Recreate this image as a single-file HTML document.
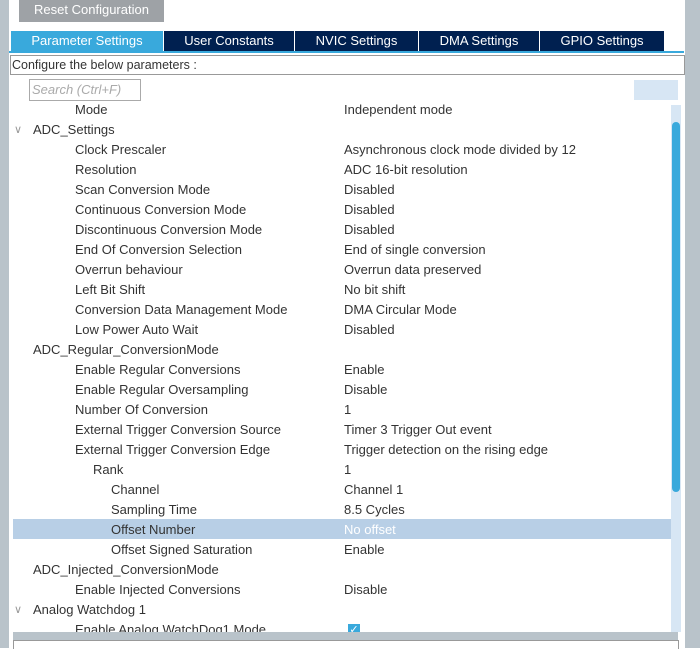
<!DOCTYPE html><html><head><style>
body{margin:0;width:700px;height:648px;overflow:hidden;background:#fff;font-family:"Liberation Sans",sans-serif;font-size:13px;color:#333;position:relative}
.a{position:absolute}
.row{position:absolute;left:13px;width:658px;height:20px;line-height:20px}
.row span{position:absolute;white-space:nowrap}
.row .v{left:331px}
.tab{position:absolute;top:31px;height:20px;line-height:20px;background:#002050;color:#fff;text-align:center;font-size:13px}
</style></head><body>
<div class="a" style="left:0;top:0;width:9px;height:648px;background:#b9c3ca"></div>
<div class="a" style="left:685px;top:0;width:15px;height:648px;background:#b9c3ca"></div>
<div class="a" style="left:19px;top:0;width:145px;height:22px;background:#9ea2a6;color:#fff;line-height:20px;text-align:center;font-size:13px">Reset Configuration</div>
<div class="tab" style="left:11px;width:152px;background:#39a9dc">Parameter Settings</div>
<div class="tab" style="left:164px;width:130px">User Constants</div>
<div class="tab" style="left:295px;width:123px">NVIC Settings</div>
<div class="tab" style="left:419px;width:120px">DMA Settings</div>
<div class="tab" style="left:540px;width:124px">GPIO Settings</div>
<div class="a" style="left:9px;top:51px;width:675px;height:2px;background:#39a9dc"></div>
<div class="a" style="left:10px;top:55px;width:672px;height:18px;border:1px solid #999;line-height:18px;padding-left:1px;box-sizing:content-box;font-size:12.5px">Configure the below parameters :</div>
<div class="a" style="left:29px;top:79px;color:#aaa;font-style:italic;line-height:20px;padding-left:2px;box-sizing:border-box;width:112px;height:22px;border:1px solid #aaa">Search (Ctrl+F)</div>
<div class="a" style="left:634px;top:80px;width:44px;height:20px;background:#d7e6f4"></div>
<div class="a" style="left:671px;top:105px;width:10px;height:527px;background:#d7e6f4"></div>
<div class="a" style="left:672px;top:122px;width:8px;height:370px;background:#39a9dc;border-radius:4px"></div>
<div class="row" style="top:519px;background:#b8cfe6"></div>
<div id="r"></div>
<div class="a" style="left:13px;top:632px;width:665px;height:8px;background:#b9c3ca"></div>
<div class="a" style="left:13px;top:640px;width:664px;height:8px;border:1px solid #999;border-bottom:none;background:#fff"></div>
<script>
var d=[["Mode","Independent mode",62],["ADC_Settings","",20,1],["Clock Prescaler","Asynchronous clock mode divided by 12",62],["Resolution","ADC 16-bit resolution",62],["Scan Conversion Mode","Disabled",62],["Continuous Conversion Mode","Disabled",62],["Discontinuous Conversion Mode","Disabled",62],["End Of Conversion Selection","End of single conversion",62],["Overrun behaviour","Overrun data preserved",62],["Left Bit Shift","No bit shift",62],["Conversion Data Management Mode","DMA Circular Mode",62],["Low Power Auto Wait","Disabled",62],["ADC_Regular_ConversionMode","",20],["Enable Regular Conversions","Enable",62],["Enable Regular Oversampling","Disable",62],["Number Of Conversion","1",62],["External Trigger Conversion Source","Timer 3 Trigger Out event",62],["External Trigger Conversion Edge","Trigger detection on the rising edge",62],["Rank","1",80],["Channel","Channel 1",98],["Sampling Time","8.5 Cycles",98],["Offset Number","No offset",98],["Offset Signed Saturation","Enable",98],["ADC_Injected_ConversionMode","",20],["Enable Injected Conversions","Disable",62],["Analog Watchdog 1","",20,1],["Enable Analog WatchDog1 Mode","\u2713",62]];
var h="";d.forEach(function(r,i){var t=100+i*20;h+='<div class="row" style="top:'+t+'px;'+(i==26?'height:12px;overflow:hidden;':'')+'">';
if(r[3])h+='<span style="left:1px;color:#999;font-size:11px">\u2228</span>';
h+='<span style="left:'+r[2]+'px">'+r[0]+'</span>';
if(i==26)h+='<span class="v" style="width:12px;height:12px;background:#39a9dc;color:#fff;line-height:12px;text-align:center;top:4px;left:335px;font-size:11px">\u2713</span>';
else h+='<span class="v"'+(i==21?' style="color:#fff"':'')+'>'+r[1]+'</span>';h+='</div>';});
document.getElementById("r").innerHTML=h;
</script>
</body></html>
